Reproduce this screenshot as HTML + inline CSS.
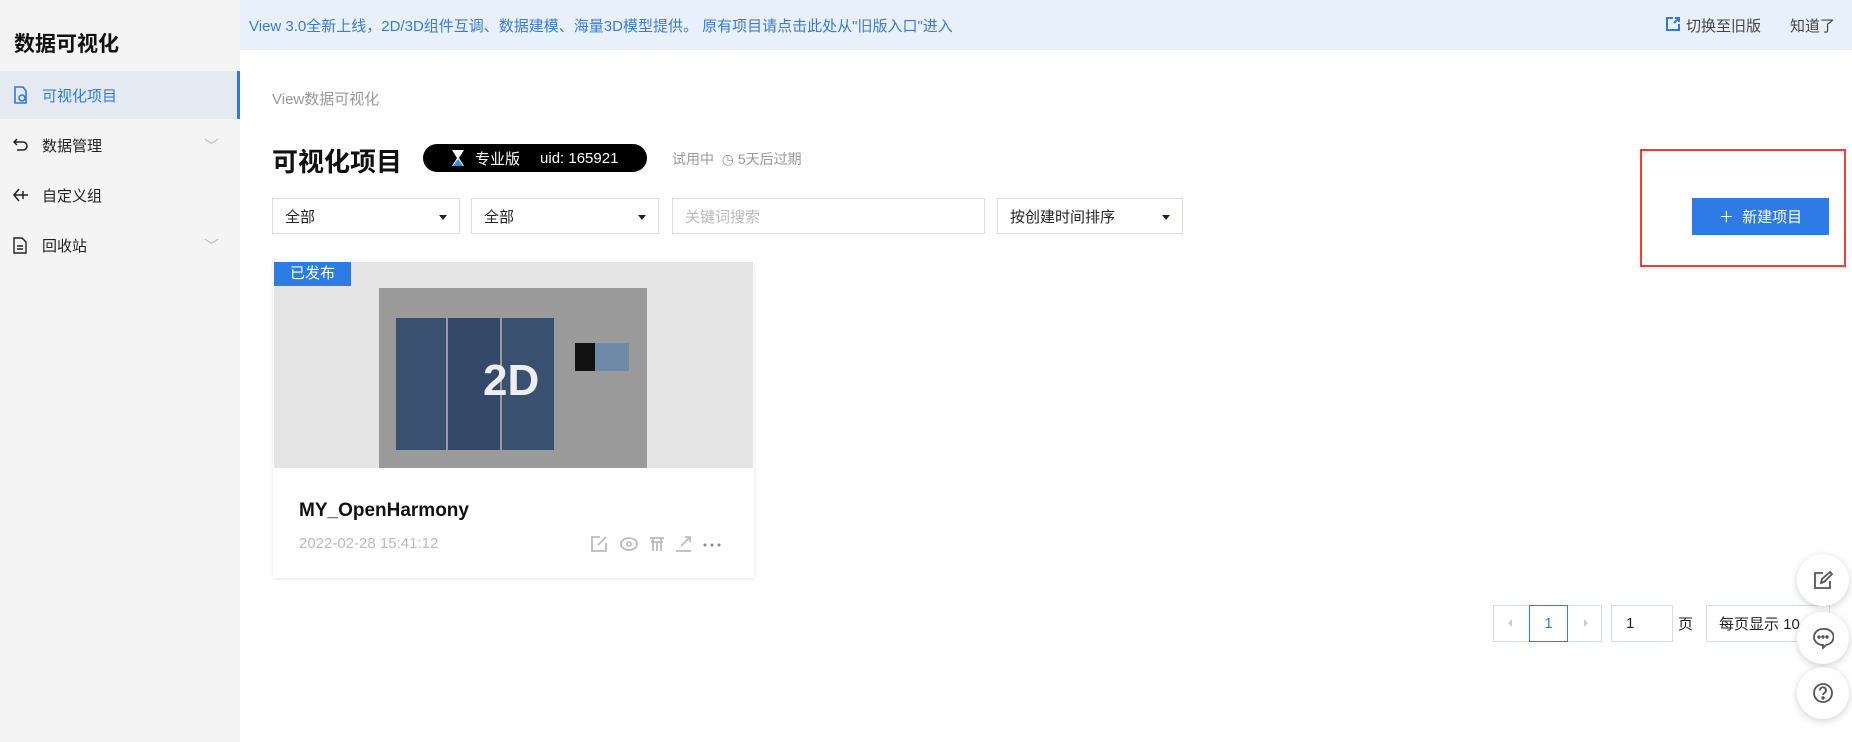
<!DOCTYPE html>
<html><head><meta charset="utf-8"><style>
*{box-sizing:border-box;margin:0;padding:0}
body{width:1852px;height:742px;overflow:hidden;background:#fff;font-family:"Liberation Sans","Noto Sans CJK SC",sans-serif;position:relative;color:#222}
.abs{position:absolute}
.side{left:0;top:0;width:240px;height:742px;background:#f4f4f5}
.side h1{position:absolute;left:14px;top:28px;font-size:21px;font-weight:bold;color:#111}
.item{position:absolute;left:0;width:240px;height:48px;font-size:15px;color:#222;display:flex;align-items:center;padding-left:42px}
.item.act{background:#e4e9f2;color:#2d7be5;border-right:3px solid #2d7be5}
.item svg.ic{position:absolute;left:13px}
.item .chev{position:absolute;left:204px;color:#bbb}
.banner{left:240px;top:0;width:1612px;height:50px;background:#e8f0fb;font-size:15px;color:#3a7bd5}
.sel{position:absolute;top:198px;height:36px;border:1px solid #d8dde6;font-size:15px;color:#222;padding:0 12px;display:flex;align-items:center}
.sel.ar:after{content:"";position:absolute;right:12px;top:16px;border:4px solid transparent;border-top:5px solid #222}
.pg{position:absolute;top:605px;height:37px;border:1px solid #d6dce6;font-size:15px;display:flex;align-items:center;justify-content:center}
.fb{position:absolute;left:1797px;width:52px;height:52px;border-radius:50%;background:#fff;box-shadow:0 2px 8px rgba(0,0,0,.18);display:flex;align-items:center;justify-content:center}
</style></head><body>
<div class="abs side">
<h1>数据可视化</h1>
<div class="item act" style="top:71px"><svg class="ic" width="16" height="18" viewBox="0 0 16 18"><path d="M10 1H2v16h11V5z" fill="none" stroke="#2d7be5" stroke-width="1.6"/><circle cx="9" cy="12" r="3" fill="none" stroke="#2d7be5" stroke-width="1.6"/></svg>可视化项目</div>
<div class="item" style="top:121px"><svg class="ic" width="16" height="16" viewBox="0 0 16 16"><path d="M4 2L1 5l3 3M1 5h9a4 4 0 010 8H4" fill="none" stroke="#222" stroke-width="1.5"/></svg>数据管理<span class="chev">﹀</span></div>
<div class="item" style="top:171px"><svg class="ic" width="16" height="16" viewBox="0 0 16 16"><path d="M6 2L1 8l5 6M1 8h14M10 4v8" fill="none" stroke="#222" stroke-width="1.5"/></svg>自定义组</div>
<div class="item" style="top:221px"><svg class="ic" width="14" height="17" viewBox="0 0 14 17"><path d="M1 1h8l4 4v11H1z M4 9h6M4 12h6" fill="none" stroke="#222" stroke-width="1.4"/></svg>回收站<span class="chev">﹀</span></div>
</div>
<div class="abs banner">
<div class="abs" style="left:9px;top:15px">View 3.0全新上线，2D/3D组件互调、数据建模、海量3D模型提供。 原有项目请点击此处从"旧版入口"进入</div>
<svg class="abs" style="left:1425px;top:16px" width="16" height="16" viewBox="0 0 16 16"><path d="M8 2H2v12h12V8M9 7l5-5M10 2h4v4" fill="none" stroke="#2d7be5" stroke-width="2"/></svg>
<div class="abs" style="left:1446px;top:15px;color:#444">切换至旧版</div>
<div class="abs" style="left:1550px;top:15px;color:#444">知道了</div>
</div>
<div class="abs" style="left:272px;top:88px;font-size:15px;color:#999">View数据可视化</div>
<div class="abs" style="left:272px;top:142px;font-size:26px;font-weight:bold;color:#111">可视化项目</div>
<div class="abs" style="left:423px;top:144px;width:224px;height:28px;border-radius:14px;background:#000;color:#fff;font-size:15px;display:flex;align-items:center;padding-left:28px">
<svg width="14" height="16" viewBox="0 0 14 16" style="margin-right:10px"><path d="M1 0h12L8 8l5 8H1l5-8z" fill="#fff"/><path d="M7 9l5 7H2z" fill="#2d8cf0"/></svg>专业版<span style="margin-left:20px">uid: 165921</span></div>
<div class="abs" style="left:672px;top:149px;font-size:14px;color:#999">试用中 &nbsp;◷ 5天后过期</div>
<div class="sel ar" style="left:272px;width:188px">全部</div>
<div class="sel ar" style="left:471px;width:188px">全部</div>
<div class="sel" style="left:672px;width:313px;color:#bbb">关键词搜索</div>
<div class="sel ar" style="left:997px;width:186px">按创建时间排序</div>
<div class="abs" style="left:1640px;top:149px;width:206px;height:118px;border:2px solid #ef3b3b"></div>
<div class="abs" style="left:1692px;top:198px;width:137px;height:37px;background:#2d7be5;color:#fff;font-size:15px;display:flex;align-items:center;justify-content:center">＋&nbsp; 新建项目</div>
<div class="abs" style="left:273px;top:261px;width:481px;height:317px;background:#fff;box-shadow:0 1px 4px rgba(0,0,0,.1)">
<div class="abs" style="left:1px;top:1px;width:479px;height:206px;background:#e4e4e4"></div>
<div class="abs" style="left:106px;top:27px;width:268px;height:180px;background:#9a9a9a">
<div class="abs" style="left:17px;top:30px;width:50px;height:132px;background:#3a5070"></div>
<div class="abs" style="left:69px;top:30px;width:52px;height:132px;background:#34496a"></div>
<div class="abs" style="left:123px;top:30px;width:52px;height:132px;background:#3a5070"></div>
<div class="abs" style="left:196px;top:55px;width:54px;height:28px;background:#6f8aa8"></div>
<div class="abs" style="left:196px;top:55px;width:20px;height:28px;background:#111"></div>
<div class="abs" style="left:104px;top:68px;font-size:44px;font-weight:bold;color:#eee">2D</div>
</div>
<div class="abs" style="left:1px;top:1px;width:77px;height:24px;background:#2d7be5;color:#fff;font-size:15px;text-align:center;line-height:24px">已发布</div>
<div class="abs" style="left:26px;top:239px;font-size:19px;font-weight:bold;color:#111">MY_OpenHarmony</div>
<div class="abs" style="left:26px;top:274px;font-size:15px;color:#bbb">2022-02-28 15:41:12</div>
<svg class="abs" style="left:317px;top:273px" width="140" height="20" viewBox="0 0 140 20" fill="none" stroke="#bbb" stroke-width="1.8"><path d="M10 3H2v14h14V9M8 11l8-8"/><ellipse cx="39" cy="10" rx="8" ry="6"/><circle cx="39" cy="10" r="2"/><path d="M60 4h14M63 4v13M71 4v13M67 8v9M61 8h12"/><path d="M86 17h15M91 12l9-9M95 3h5v5"/><circle cx="115" cy="11" r="1.5" fill="#888" stroke="none"/><circle cx="122" cy="11" r="1.5" fill="#888" stroke="none"/><circle cx="129" cy="11" r="1.5" fill="#888" stroke="none"/></svg>
</div>
<div class="pg" style="left:1493px;width:109px;border-color:#d6dce6"></div>
<div class="abs" style="left:1504px;top:619px;border:4px solid transparent;border-right:4px solid #ccc;width:0;height:0"></div>
<div class="abs" style="left:1584px;top:619px;border:4px solid transparent;border-left:4px solid #ccc;width:0;height:0"></div>
<div class="pg" style="left:1529px;width:39px;border-color:#2d7be5;color:#2d7be5">1</div>
<div class="pg" style="left:1611px;width:62px;justify-content:flex-start;padding-left:14px">1</div>
<div class="abs" style="left:1678px;top:613px;font-size:15px">页</div>
<div class="pg" style="left:1706px;width:124px;justify-content:flex-start;padding-left:12px">每页显示 10</div>
<div class="fb" style="top:554px"><svg width="20" height="20" viewBox="0 0 20 20" fill="none" stroke="#555" stroke-width="1.8"><path d="M10 3H2v15h15V11M8 13l1-4 8-7 2 2-8 8z"/></svg></div>
<div class="fb" style="top:612px"><svg width="22" height="22" viewBox="0 0 22 22" fill="none" stroke="#555" stroke-width="1.8"><path d="M11 2a9 8 0 100 16l0 3 3-3a9 8 0 00-3-16z"/><circle cx="7" cy="10" r=".8" fill="#555"/><circle cx="11" cy="10" r=".8" fill="#555"/><circle cx="15" cy="10" r=".8" fill="#555"/></svg></div>
<div class="fb" style="top:667px"><svg width="22" height="22" viewBox="0 0 22 22" fill="none" stroke="#555" stroke-width="1.8"><circle cx="11" cy="11" r="9"/><path d="M8 8.5a3 3 0 115 2c-1 .8-2 1.2-2 2.5"/><circle cx="11" cy="16" r=".8" fill="#555"/></svg></div>
</body></html>
